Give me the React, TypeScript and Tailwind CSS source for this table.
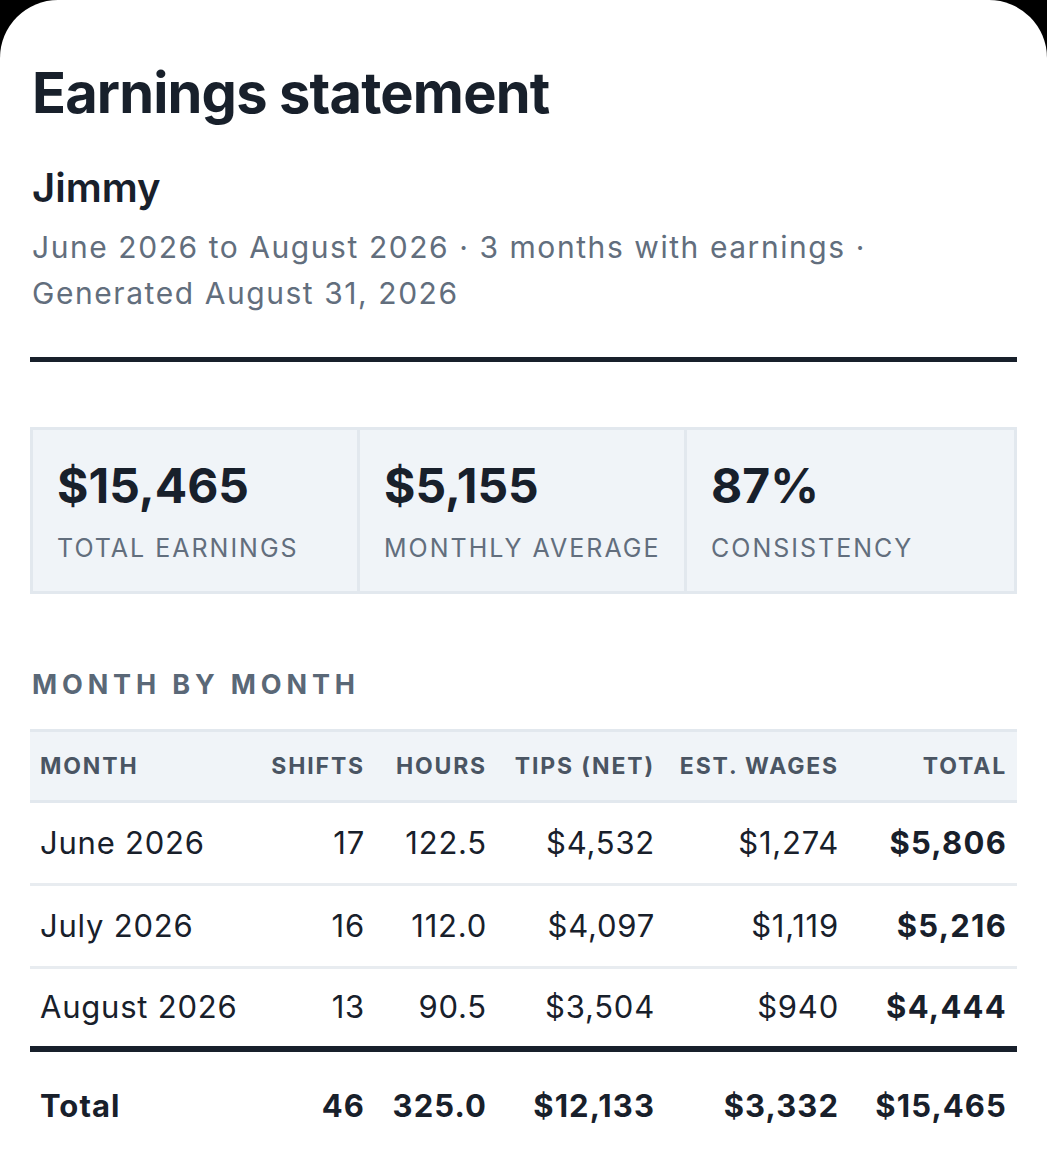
import React from 'react';

const rows = [
  { month: 'June 2026', shifts: '17', hours: '122.5', tips: '$4,532', wages: '$1,274', total: '$5,806' },
  { month: 'July 2026', shifts: '16', hours: '112.0', tips: '$4,097', wages: '$1,119', total: '$5,216' },
  { month: 'August 2026', shifts: '13', hours: '90.5', tips: '$3,504', wages: '$940', total: '$4,444' },
];

const stats = [
  { value: '$15,465', label: 'Total earnings' },
  { value: '$5,155', label: 'Monthly average' },
  { value: '87%', label: 'Consistency' },
];

const cols = 'grid grid-cols-[227px_118px_122px_168px_184px_168px]';

const App: React.FC = () => {
  return (
    <div className="min-h-screen bg-black font-['Inter',sans-serif]">
      <div className="bg-white rounded-t-[58px] px-[30px] pt-[60px] min-h-[1150px] text-[#18202b]">
        {/* Header */}
        <h1 className="pl-[2px] text-[56px] font-bold leading-[66px] tracking-[-0.015em]">Earnings statement</h1>
        <div className="mt-[38px] pl-[2px] text-[40px] font-semibold leading-[48px]">Jimmy</div>
        <p className="mt-[12px] pl-[2px] text-[30px] leading-[46px] tracking-[0.052em] text-[#626e7d]">
          June 2026 to August 2026 · 3 months with earnings ·<br />
          Generated August 31, 2026
        </p>
        <div className="mt-[41px] border-b-[5px] border-[#18202b]" />

        {/* Stats */}
        <div className="mt-[65px] grid grid-cols-3 border-[3px] border-[#e2e8ee] bg-[#f0f4f8] divide-x-[3px] divide-[#e2e8ee]">
          {stats.map((s) => (
            <div key={s.label} className="pl-[24px] pt-[28px] pb-[27px]">
              <div className="text-[48px] font-bold leading-[56px]">{s.value}</div>
              <div className="mt-[18px] text-[25px] leading-[32px] uppercase tracking-[0.08em] text-[#626e7d]">{s.label}</div>
            </div>
          ))}
        </div>

        {/* Month by month */}
        <h2 className="mt-[75px] pl-[2px] text-[27px] font-bold leading-[32px] uppercase tracking-[0.18em] text-[#5a6877]">Month by month</h2>
        <div className="mt-[28px]">
          <div className={`${cols} h-[74px] items-center border-y-[3px] border-[#e2e8ee] bg-[#f0f4f8] text-[23px] font-bold uppercase tracking-[0.08em] text-[#4a5563]`}>
            <div className="px-[10px]">Month</div>
            <div className="px-[10px] text-right">Shifts</div>
            <div className="px-[10px] text-right">Hours</div>
            <div className="px-[10px] text-right">Tips (net)</div>
            <div className="px-[10px] text-right">Est. wages</div>
            <div className="px-[10px] text-right">Total</div>
          </div>
          {rows.map((r, i) => (
            <div
              key={r.month}
              className={`${cols} h-[83px] items-center text-[31px] tracking-[0.025em] ${
                i === rows.length - 1 ? 'border-b-[6px] border-[#18202b]' : 'border-b-[3px] border-[#e8ecf0]'
              }`}
            >
              <div className="px-[10px]">{r.month}</div>
              <div className="px-[10px] text-right">{r.shifts}</div>
              <div className="px-[10px] text-right">{r.hours}</div>
              <div className="px-[10px] text-right">{r.tips}</div>
              <div className="px-[10px] text-right">{r.wages}</div>
              <div className="px-[10px] text-right font-bold tracking-[0.04em]">{r.total}</div>
            </div>
          ))}
          <div className={`${cols} h-[108px] items-center text-[31px] font-bold tracking-[0.035em]`}>
            <div className="px-[10px]">Total</div>
            <div className="px-[10px] text-right">46</div>
            <div className="px-[10px] text-right">325.0</div>
            <div className="px-[10px] text-right">$12,133</div>
            <div className="px-[10px] text-right">$3,332</div>
            <div className="px-[10px] text-right">$15,465</div>
          </div>
        </div>
      </div>
    </div>
  );
};

export default App;
